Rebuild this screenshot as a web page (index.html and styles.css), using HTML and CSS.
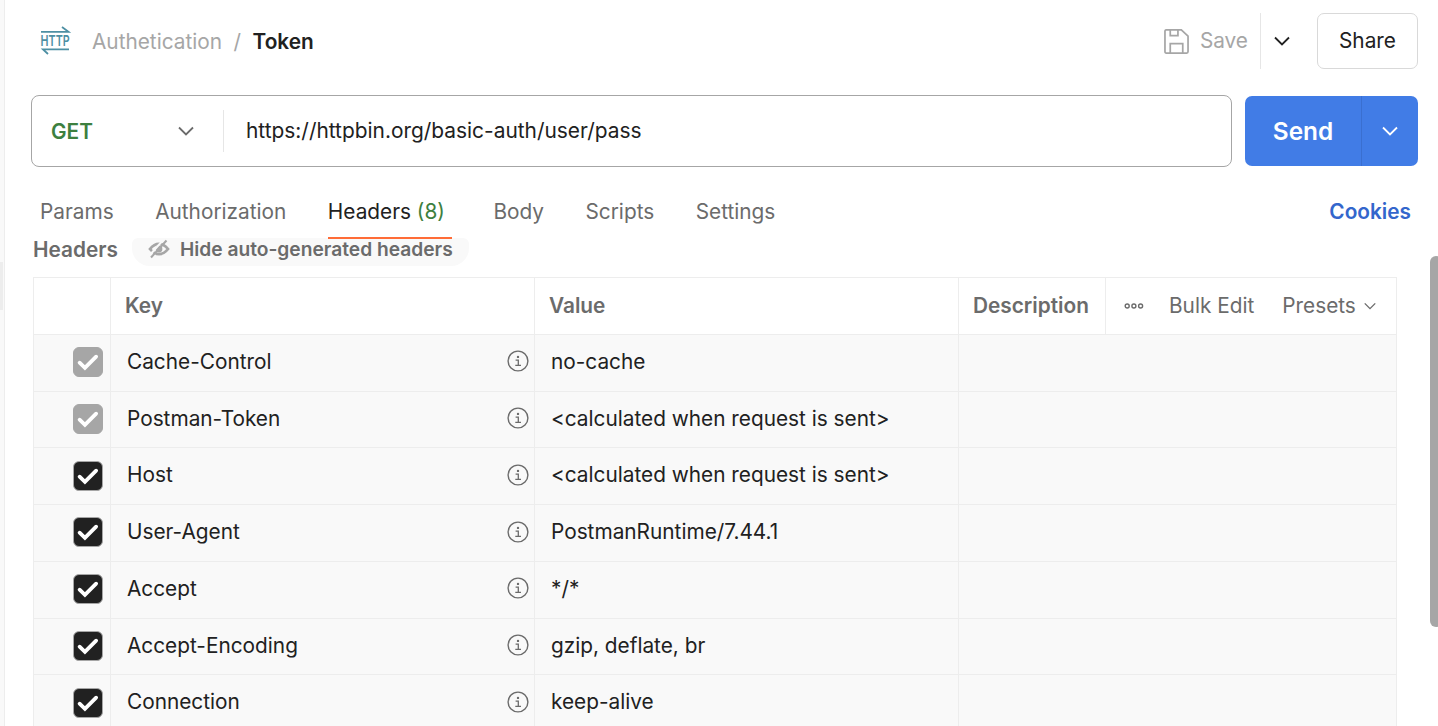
FILE: index.html
```html
<!DOCTYPE html>
<html lang="en">

<head>
    <meta charset="UTF-8">
    <meta name="viewport" content="width=device-width, initial-scale=1.0">
    <title>Token</title>
    <link rel="stylesheet" href="styles.css">
</head>
<body>
    <svg class="defs" width="0" height="0">
        <symbol id="chevron" viewBox="0 0 16 10">
            <path d="M1 1.5 L8 8.5 L15 1.5" fill="none" stroke="currentColor" stroke-width="1.8"/>
        </symbol>
        <symbol id="info" viewBox="0 0 22 22">
            <circle cx="11" cy="11" r="9.9" fill="none" stroke="currentColor" stroke-width="1.4"/>
            <circle cx="11" cy="6.9" r="1.2" fill="currentColor"/>
            <path d="M8.6 10.2 H11.3 V15.3 M8.3 15.3 H14" fill="none" stroke="currentColor" stroke-width="1.3"/>
        </symbol>
        <symbol id="check" viewBox="0 0 30 30">
            <path d="M6 15.8 L11.7 21.3 L23.7 9.3" fill="none" stroke="#fff" stroke-width="4.1" stroke-linecap="round"/>
        </symbol>
    </svg>

    <aside class="rail"><div class="rail-handle"></div></aside>

    <main class="request">
        <header class="topbar">
            <svg class="http-icon" width="32" height="30" viewBox="0 0 32 30">
                <path d="M1 5.8 H28.5 L22 1 M29 23.3 H3 L8 28" fill="none" stroke="#4d8fa3" stroke-width="1.8"/>
                <text x=".6" y="20.2" textLength="29" lengthAdjust="spacingAndGlyphs">HTTP</text>
            </svg>
            <span class="crumb">Authetication</span>
            <span class="slash">/</span>
            <span class="current">Token</span>
            <div class="actions">
                <button class="save">
                    <svg width="25" height="25" viewBox="0 0 26 26" fill="none" stroke="currentColor" stroke-width="1.8">
                        <path d="M2.2 1 H18 L25 7.5 V23.5 Q25 25 23.6 25 H2.4 Q1 25 1 23.5 V2.4 Q1 1 2.2 1 Z"/>
                        <path d="M6.5 1 V6.8 H14.5 V1 M6.5 25 V15.3 H19.5 V25"/>
                    </svg>
                    Save
                </button>
                <button class="save-more"><svg width="16" height="10"><use href="#chevron"/></svg></button>
                <button class="share">Share</button>
            </div>
        </header>

        <section class="url-row">
            <div class="url-bar">
                <div class="method">
                    <span>GET</span>
                    <svg width="16" height="10"><use href="#chevron"/></svg>
                </div>
                <div class="url">https://httpbin.org/basic-auth/user/pass</div>
            </div>
            <div class="send">
                <button class="send-main">Send</button>
                <button class="send-more"><svg width="16" height="10"><use href="#chevron"/></svg></button>
            </div>
        </section>

        <nav class="tabs">
            <a class="tab">Params</a>
            <a class="tab">Authorization</a>
            <a class="tab active">Headers <span class="count">(8)</span></a>
            <a class="tab">Body</a>
            <a class="tab">Scripts</a>
            <a class="tab">Settings</a>
            <a class="cookies">Cookies</a>
        </nav>

        <div class="subhead">
            <span class="subhead-title">Headers</span>
            <button class="toggle">
                <svg width="22" height="20" viewBox="0 0 22 20" fill="none" stroke="currentColor">
                    <path d="M2 10 Q6 4.9 11 4.9 T20 10 Q16 15.1 11 15.1 T2 10 Z" stroke-width="2.8"/>
                    <circle cx="11" cy="10" r="3.4" fill="currentColor" stroke="none"/>
                    <path d="M1 17 L16 0" stroke="#f9f9f9" stroke-width="2"/>
                    <path d="M3 18.5 L18.5 1.5" stroke-width="2"/>
                </svg>
                Hide auto-generated headers
            </button>
        </div>

        <div class="grid">
            <div class="row head">
                <div class="cell"></div>
                <div class="cell">Key</div>
                <div class="cell">Value</div>
                <div class="cell">Description</div>
                <div class="cell tools">
                    <svg class="dots" width="20" height="8" viewBox="0 0 20 8" fill="none" stroke="currentColor" stroke-width="1.4">
                        <circle cx="3.2" cy="4" r="2"/><circle cx="9.9" cy="4" r="2"/><circle cx="16.6" cy="4" r="2"/>
                    </svg>
                    <span class="bulk">Bulk Edit</span>
                    <span class="presets">Presets</span>
                    <svg width="12" height="8"><use href="#chevron"/></svg>
                </div>
            </div>
            <div class="row">
                <div class="cell pick"><svg class="box locked"><use href="#check"/></svg></div>
                <div class="cell key">Cache-Control<svg class="info"><use href="#info"/></svg></div>
                <div class="cell value">no-cache</div>
                <div class="cell desc"></div>
            </div>
            <div class="row">
                <div class="cell pick"><svg class="box locked"><use href="#check"/></svg></div>
                <div class="cell key">Postman-Token<svg class="info"><use href="#info"/></svg></div>
                <div class="cell value">&lt;calculated when request is sent&gt;</div>
                <div class="cell desc"></div>
            </div>
            <div class="row">
                <div class="cell pick"><svg class="box"><use href="#check"/></svg></div>
                <div class="cell key">Host<svg class="info"><use href="#info"/></svg></div>
                <div class="cell value">&lt;calculated when request is sent&gt;</div>
                <div class="cell desc"></div>
            </div>
            <div class="row">
                <div class="cell pick"><svg class="box"><use href="#check"/></svg></div>
                <div class="cell key">User-Agent<svg class="info"><use href="#info"/></svg></div>
                <div class="cell value">PostmanRuntime/7.44.1</div>
                <div class="cell desc"></div>
            </div>
            <div class="row">
                <div class="cell pick"><svg class="box"><use href="#check"/></svg></div>
                <div class="cell key">Accept<svg class="info"><use href="#info"/></svg></div>
                <div class="cell value">*/*</div>
                <div class="cell desc"></div>
            </div>
            <div class="row">
                <div class="cell pick"><svg class="box"><use href="#check"/></svg></div>
                <div class="cell key">Accept-Encoding<svg class="info"><use href="#info"/></svg></div>
                <div class="cell value">gzip, deflate, br</div>
                <div class="cell desc"></div>
            </div>
            <div class="row">
                <div class="cell pick"><svg class="box"><use href="#check"/></svg></div>
                <div class="cell key">Connection<svg class="info"><use href="#info"/></svg></div>
                <div class="cell value">keep-alive</div>
                <div class="cell desc"></div>
            </div>
        </div>
    </main>

    <div class="scroll"><div class="thumb"></div></div>
</body>
</html>
```
FILE: styles.css
```css
* { box-sizing: border-box; }
body {
    margin: 0;
    height: 726px;
    display: flex;
    overflow: hidden;
    background: #fff;
    color: #212121;
    font-family: Inter, "Liberation Sans", sans-serif;
    font-size: 20.8px;
    line-height: 26px;
    white-space: nowrap;
}
button {
    font: inherit;
    color: inherit;
    background: none;
    border: none;
    padding: 0;
}
svg { display: block; flex: none; }
.defs { display: none; }

.rail {
    flex: none;
    width: 5px;
    padding-top: 262px;
    background: #f9f9f9;
    border-right: 1px solid #ededed;
}
.rail-handle {
    width: 3px;
    height: 48px;
    background: #ededed;
}

.request {
    flex: none;
    width: 1413px;
    padding: 13px 0 0 26px;
}

/* breadcrumb and actions */
.topbar {
    display: flex;
    align-items: center;
    height: 56px;
    padding-left: 9px;
}
.topbar > span { padding-top: 1px; }
.http-icon { overflow: visible; }
.http-icon text {
    font-size: 15.2px;
    font-weight: 600;
    fill: #4d8fa3;
}
.crumb {
    margin-left: 20px;
    color: #a6a6a6;
}
.slash {
    margin: 0 11.5px;
    color: #a6a6a6;
}
.current { font-weight: 600; }
.actions {
    display: flex;
    align-items: center;
    margin-left: auto;
}
.save {
    display: flex;
    align-items: center;
    gap: 11px;
    color: #a6a6a6;
}
.save-more {
    height: 56px;
    margin-left: 12px;
    padding: 0 27px 0 13px;
    border-left: 1px solid #e6e6e6;
}
.share {
    width: 101px;
    height: 56px;
    border: 1.5px solid #d9d9d9;
    border-radius: 7px;
}

/* url bar */
.url-row {
    display: flex;
    align-items: center;
    gap: 13px;
    margin-top: 26px;
}
.url-bar {
    display: flex;
    align-items: center;
    width: 1201px;
    height: 72px;
    border: 1px solid #a6a6a6;
    border-radius: 8px;
}
.method {
    display: flex;
    align-items: center;
    justify-content: space-between;
    width: 192px;
    height: 42px;
    padding: 0 29px 0 19px;
    border-right: 1px solid #e6e6e6;
    color: #6b6b6b;
}
.method span {
    padding-top: 2px;
    font-weight: 600;
    color: #3d803f;
}
.url {
    padding-left: 22px;
    font-size: 20.9px;
}
.send {
    display: flex;
    width: 173px;
    height: 70px;
    border-radius: 7px;
    background: #417ce6;
    color: #fff;
}
.send-main {
    width: 117px;
    font-size: 24.4px;
    font-weight: 600;
    border-right: 1px solid #3a6fd0;
}
.send-more { padding-left: 20px; }

/* tabs */
.tabs {
    display: flex;
    height: 72px;
    padding: 32px 7px 0 9px;
    color: #6b6b6b;
}
.tab { margin-right: 41.5px; }
.tab.active {
    position: relative;
    z-index: 1;
    height: 40px;
    padding-right: 7px;
    color: #212121;
    border-bottom: 2px solid #ff6c37;
}
.count { color: #3d803f; }
.cookies {
    margin-left: auto;
    font-weight: 600;
    color: #3366cc;
}

.subhead {
    display: flex;
    height: 38px;
    padding-left: 2px;
    font-weight: 600;
    color: #6b6b6b;
}
.subhead-title { margin-top: -2px; }
.toggle {
    display: flex;
    align-items: center;
    gap: 10px;
    width: 337px;
    height: 28px;
    margin: -1px 0 0 14px;
    padding: 0 0 7px 16px;
    font-size: 19.2px;
    background: #f9f9f9;
    border-radius: 6px 6px 18px 18px;
}
.toggle svg { color: #a6a6a6; }

/* headers table */
.grid {
    width: 1364px;
    margin-left: 2px;
    border: 1px solid #ededed;
    border-bottom: none;
}
.row {
    display: grid;
    grid-template-columns: 76px 424px 424px 1fr;
    height: 56.75px;
    background: #f9f9f9;
    border-bottom: 1px solid #ededed;
}
.cell {
    display: flex;
    align-items: center;
    border-left: 1px solid #ededed;
}
.cell:first-child { border-left: none; }
.head {
    grid-template-columns: 76px 424px 424px 147px 1fr;
    background: #fff;
    color: #6b6b6b;
    font-weight: 600;
}
.head .cell { padding-left: 14px; }
.head .tools {
    padding-left: 18px;
    font-weight: 400;
}
.bulk { margin-left: 25px; }
.presets { margin: 0 8px 0 28px; }
.pick { padding: 0 0 1px 39px; }
.box {
    width: 30px;
    height: 30px;
    border-radius: 6px;
    background: #212121;
    border: 1px solid #a6a6a6;
}
.box.locked { background: #a6a6a6; }
.key {
    justify-content: space-between;
    padding: 0 5px 1.5px 16px;
}
.value { padding: 0 0 1.5px 16px; }
.info {
    width: 22px;
    height: 22px;
    margin-bottom: 1px;
    color: #6b6b6b;
}

.scroll { padding-top: 256px; margin-left: 11.5px; }
.thumb {
    width: 12px;
    height: 371px;
    background: #a6a6a6;
    border-radius: 6px;
}
```
